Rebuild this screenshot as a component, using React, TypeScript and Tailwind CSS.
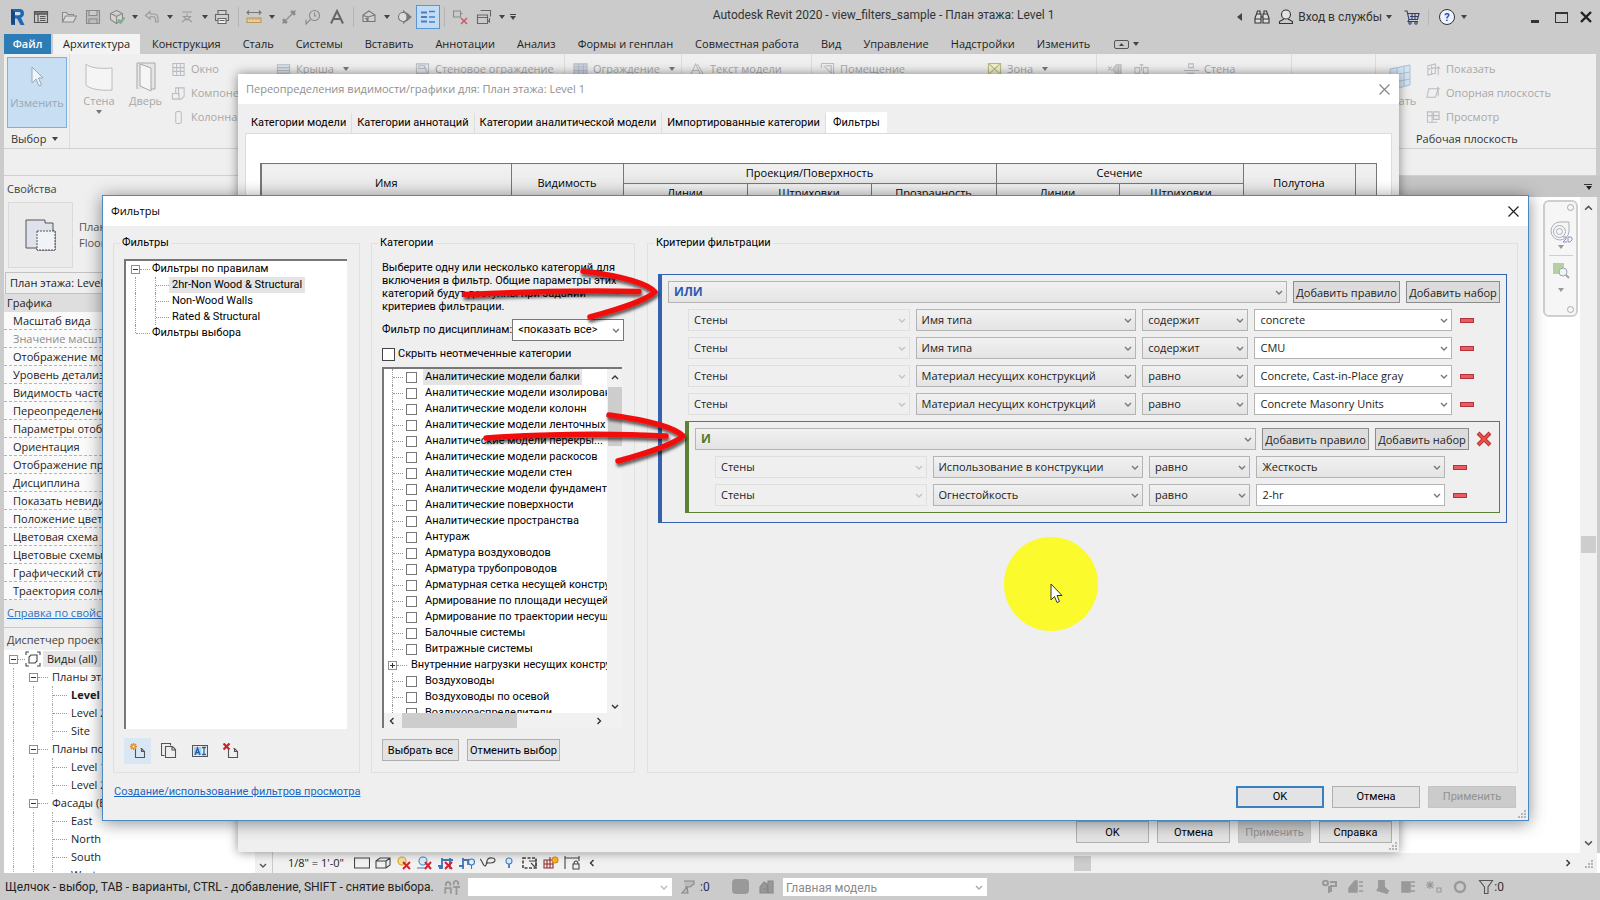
import type { ReactNode } from "react";

const FONT = "font-['Open_Sans','Noto_Sans',sans-serif]";
const NARROW = "font-['Roboto','Noto_Sans',sans-serif]";

function Svg({
  children,
  size = 16,
  color = "#8a8a8a",
}: {
  children: ReactNode;
  size?: number;
  color?: string;
}) {
  return (
    <svg
      width={size}
      height={size}
      viewBox="0 0 16 16"
      fill="none"
      stroke={color}
      strokeWidth="1.1"
      className="shrink-0"
      aria-hidden="true"
    >
      {children}
    </svg>
  );
}

function Caret({ color = "#444" }: { color?: string }) {
  return (
    <svg width="6" height="4" viewBox="0 0 6 4" className="shrink-0" aria-hidden="true">
      <path d="M0 0h6L3 4z" fill={color} />
    </svg>
  );
}

function Chevron({
  dir = "down",
  color = "#555",
  size = 8,
}: {
  dir?: "down" | "up" | "left" | "right";
  color?: string;
  size?: number;
}) {
  const d = {
    down: "M1 3l3 3 3-3",
    up: "M1 6l3-3 3 3",
    left: "M5.500 1l-3 3 3 3",
    right: "M2.500 1l3 3-3 3",
  }[dir];
  return (
    <svg width={size} height={size} viewBox="0 0 8 8" className="shrink-0" aria-hidden="true">
      <path d={d} fill="none" stroke={color} strokeWidth="1.4" />
    </svg>
  );
}

function CloseIcon({ color = "#222" }: { color?: string }) {
  return (
    <svg width="11" height="11" viewBox="0 0 11 11" aria-hidden="true">
      <path d="M.5.5l10 10M10.500.5l-10 10" stroke={color} strokeWidth="1.2" />
    </svg>
  );
}

function Grip() {
  return (
    <svg width="9" height="9" viewBox="0 0 9 9" fill="#b5b5b5" aria-hidden="true">
      <path d="M7 1h2v2H7zM4 4h2v2H4zM7 4h2v2H7zM1 7h2v2H1zM4 7h2v2H4zM7 7h2v2H7z" />
    </svg>
  );
}

/* ---------- title bar ---------- */

const icons: Record<string, ReactNode> = {
  logo: (
    <svg width="18" height="18" viewBox="0 0 18 18" aria-hidden="true">
      <path d="M3 1h8c4 0 5 2 5 4.500 0 2-1 3.500-3 4.200L16.500 17h-4L9 10.500H7V17H3z" fill="#1f69b4" />
      <path d="M7 4h3.500c1.500 0 2 .7 2 1.600 0 1-.6 1.700-2 1.700H7z" fill="#cfe0f2" />
      <path d="M3 1l4 3v13l-4-2z" fill="#164886" />
    </svg>
  ),
  home: (
    <Svg color="#555">
      <path d="M1.500 2.500h13v11h-13zM1.500 5h13M5 5v8.500M7 7.500h5.500M7 9.500h5.500M7 11.500h5.500" />
      <path d="M1.500 2.500h13V5h-13z" fill="#777" />
    </Svg>
  ),
  open: (
    <Svg>
      <path d="M1.500 13V3.500h4l1.500 2h5.500V7M1.500 13l3-6h11l-3 6z" fill="#d9d9d9" />
    </Svg>
  ),
  save: (
    <Svg>
      <path d="M1.500 1.500h13v13h-13zM4 1.500v5h8v-5M4 14.500V10h8v4.500" fill="#bdbdbd" />
    </Svg>
  ),
  sync: (
    <Svg>
      <path d="M7.500 1.500l6 3v6l-6 4-6-4v-6zM1.500 4.500l6 3 6-3M7.500 7.500v7" fill="#d4d4d4" />
      <path d="M9 10.500l2.500 3 4-5" stroke="#7fae8d" strokeWidth="2.4" />
    </Svg>
  ),
  undo: (
    <Svg color="#9a9a9a">
      <path d="M1.500 6.500l4.500-4v2.500h3.500c3 0 4.500 2 4.500 4.500v3.500h-2.500v-3c0-1.500-.8-2.300-2.300-2.300H6v2.500z" />
    </Svg>
  ),
  redo: (
    <Svg color="#9a9a9a">
      <path d="M3 3h10M8 4.500v3h3.500L8 11 4.500 7.500H8M3 13l4-3M9 10l4 3" />
    </Svg>
  ),
  print: (
    <Svg color="#666">
      <path d="M4 5.500v-4h8v4M1.500 5.500h13v6h-13z" fill="#d0d0d0" />
      <path d="M4 9.500h8v5H4zM5.500 11.500h5" fill="#eee" />
    </Svg>
  ),
  measure: (
    <Svg color="#777">
      <path d="M1 3.500h14M3 1.500l-2 2 2 2M13 1.500l2 2-2 2" />
      <path d="M1 9h14v4.500H1z" fill="#e8cf9a" stroke="#b79a5c" />
      <path d="M4 9v2M7 9v2M10 9v2M13 9v2" stroke="#b79a5c" />
    </Svg>
  ),
  dim: (
    <Svg>
      <path d="M3.500 12.500l9-9M1.500 10.500l4 4M10.500 1.500l4 4" />
      <path d="M2 14l1-4 3 3zM14 2l-4 1 3 3z" fill="#8a8a8a" />
    </Svg>
  ),
  tag: (
    <Svg>
      <circle cx="9.500" cy="6.500" r="5" />
      <path d="M9.500 3.500v3.500h2M5.500 10.500L1 15v-4.500" />
    </Svg>
  ),
  text: (
    <Svg color="#666">
      <path d="M2 14.500L8 2l6 12.500M4.200 10h7.600" strokeWidth="2" />
    </Svg>
  ),
  cube: (
    <Svg color="#777">
      <path d="M2 6l6-4 6 4v6.500H2zM2 6.500l5 1.500v5M7 8l7-2M4 9.500h2v3.500" fill="#cfcfcf" />
    </Svg>
  ),
  section: (
    <Svg color="#777">
      <circle cx="7" cy="8" r="4.500" fill="#ddd" />
      <path d="M7 1.500l6.500 6.500L7 14.500" />
      <path d="M11 4.500l4 3.500-4 3.500z" fill="#777" />
    </Svg>
  ),
  thin: (
    <Svg color="#4a7fc0">
      <path d="M1 3.500h6M1 8h6M1 12.500h6" strokeWidth="2.200" />
      <path d="M9 2.500h6M9 8h6M9 13h6" strokeWidth="1.300" />
    </Svg>
  ),
  closeHidden: (
    <Svg>
      <path d="M1.500 2h7v6h-7zM8.500 4.500h2" />
      <path d="M9 9l6 6M15 9l-6 6" stroke="#c75b64" strokeWidth="1.5" />
    </Svg>
  ),
  windows: (
    <Svg color="#666">
      <path d="M4.500 1.500h10v6M1.500 6h10v8.500h-10zM1.500 8.500h10M13.500 9v4l-1.500-1.500" />
    </Svg>
  ),
};

// "v" is a drop-down arrow, "|" is a separator, "~" is a small space
const quickAccess = [
  "logo", "home", "~", "open", "save", "sync", "v", "undo", "v", "redo", "v", "print", "|",
  "measure", "v", "dim", "tag", "text", "|", "cube", "v", "section", "thin", "|",
  "closeHidden", "windows", "v", "menu",
];

function TitleBar() {
  return (
    <header className="flex h-[34px] shrink-0 items-center bg-[#cbcbcb] pl-[5px] pr-2 text-[#333]">
      <div className="flex items-center">
        {quickAccess.map((name, i) => {
          if (name === "~") return <span key={i} className="w-1" />;
          if (name === "|")
            return (
              <span key={i} className="flex w-2 justify-center">
                <span className="h-5 w-px bg-[#b5b5b5]" />
              </span>
            );
          if (name === "v" || name === "menu")
            return (
              <button key={i} aria-label="Ещё" className="flex h-6 w-[11px] flex-col items-center justify-center gap-px">
                {name === "menu" && <span className="h-px w-1.5 bg-[#444]" />}
                <Caret />
              </button>
            );
          return (
            <button
              key={i}
              aria-label={name}
              className={`flex h-6 w-6 items-center justify-center ${
                name === "thin" ? "border border-[#5a96d0] bg-[#c3dcf5]" : ""
              }`}
            >
              {icons[name]}
            </button>
          );
        })}
      </div>
      <h1 className={`flex-1 pb-1 pl-3 text-center text-[12px] whitespace-nowrap ${NARROW}`}>
        Autodesk Revit 2020 - view_filters_sample - План этажа: Level 1
      </h1>
      <div className={`flex items-center text-[12px] ${NARROW}`}>
        <svg width="5" height="8" viewBox="0 0 5 8" className="mr-3" aria-hidden="true">
          <path d="M5 0v8L0 4z" fill="#444" />
        </svg>
        <button aria-label="Поиск" className="mr-2">
          <Svg color="#333">
            <path d="M2.500 5l1-3h2.500v3M13.500 5l-1-3H10v3M1 9l1.500-4h4.500v9H1zM15 9l-1.500-4H9v9h6zM7 8h2M1 10h6M9 10h6" fill="#ddd" />
          </Svg>
        </button>
        <button className="flex items-center gap-1">
          <Svg color="#333">
            <circle cx="8" cy="5.500" r="4.500" fill="#e4e4e4" />
            <path d="M6 10l-4.500 2.500v2h13v-2L10 10" />
          </Svg>
          Вход в службы
          <Caret />
        </button>
        <button aria-label="Магазин" className="ml-3 border-r border-[#b8b8b8] pr-2">
          <Svg color="#33406b">
            <path d="M.5 2h2.500l2 8.500h8.500L15 4.500H4M5 10.500L4 12.500h10M6 7.500h8M8 4.500v6M11 4.500v6" />
            <circle cx="6" cy="14" r="1.200" />
            <circle cx="12" cy="14" r="1.200" />
          </Svg>
        </button>
        <button className="ml-2.5 flex items-center gap-1.5" aria-label="Справка">
          <span className="flex h-4 w-4 items-center justify-center rounded-full border border-[#333] bg-[#eef4ff] text-[11px] leading-none font-bold text-[#1f4fb0]">
            ?
          </span>
          <Caret />
        </button>
        <div className="ml-16 flex items-center gap-3">
          <button aria-label="Свернуть" className="flex h-4 w-3 items-end pb-0.5">
            <span className="h-[3px] w-2 bg-[#333]" />
          </button>
          <button aria-label="Развернуть" className="h-[11px] w-[13px] border border-t-2 border-[#333]" />
          <button aria-label="Закрыть">
            <svg width="12" height="12" viewBox="0 0 12 12" aria-hidden="true">
              <path d="M1 1l10 10M11 1L1 11" stroke="#222" strokeWidth="2.4" />
            </svg>
          </button>
        </div>
      </div>
    </header>
  );
}

const ribbonTabs = [
  "Архитектура", "Конструкция", "Сталь", "Системы", "Вставить", "Аннотации", "Анализ",
  "Формы и генплан", "Совместная работа", "Вид", "Управление", "Надстройки", "Изменить",
];

function RibbonTabs() {
  return (
    <nav className="flex h-5 shrink-0 items-stretch gap-0.5 bg-[#cbcbcb] pl-1 text-[11px] leading-[18px] text-[#222]">
      <button className="w-[47px] bg-[#2d7cb5] font-semibold text-white">Файл</button>
      {ribbonTabs.map((tab, i) => (
        <button key={tab} className={`px-[10px] whitespace-nowrap ${i === 0 ? "bg-[#f3f3f3]" : ""}`}>
          {tab}
        </button>
      ))}
      <button aria-label="Свернуть ленту" className="ml-3 flex items-center gap-1">
        <span className="flex h-[9px] w-[15px] items-center justify-center rounded-xs border border-[#555]">
          <svg width="5" height="3" viewBox="0 0 5 3" aria-hidden="true">
            <path d="M0 3h5L2.500 0z" fill="#444" />
          </svg>
        </span>
        <Caret />
      </button>
    </nav>
  );
}

/* ---------- ribbon ---------- */

function SmallTool({ icon, label, arrow }: { icon: ReactNode; label?: string; arrow?: boolean }) {
  return (
    <button disabled className="flex h-6 items-center gap-[5px] whitespace-nowrap text-[#a8a8a8]">
      <Svg size={15} color="#b9bcc2">
        {icon}
      </Svg>
      {label}
      {arrow && (
        <span className="ml-1">
          <Caret color="#777" />
        </span>
      )}
    </button>
  );
}

function Ribbon() {
  return (
    <section className="mx-1 flex h-[95px] shrink-0 overflow-hidden border-b border-[#d0d0d0] bg-[#efefef] text-[11px]">
      <div className="flex w-[66px] shrink-0 flex-col border-r border-[#dcdcdc] px-[3px] pt-[3px]">
        <button className="flex h-[71px] w-[60px] flex-col items-center justify-between border border-[#7db0dc] bg-[#c7def3] pt-2 pb-4 text-[#9aa7b4]">
          <svg width="14" height="22" viewBox="0 0 14 22" aria-hidden="true">
            <path d="M2 1v16l4-4 3 7 2.500-1-3-7H13z" fill="#eef5fc" stroke="#9aa7b4" />
          </svg>
          Изменить
        </button>
        <button className="mt-0.5 flex items-center gap-1.5 pl-1 leading-[18px] text-[#333]">
          Выбор <Caret />
        </button>
      </div>
      <div className="flex shrink-0 border-r border-[#dcdcdc] pt-[3px]">
        <button disabled className="flex w-[58px] flex-col items-center pt-[5px] text-[#a8a8a8]">
          <svg width="28" height="30" viewBox="0 0 28 30" aria-hidden="true">
            <path d="M1 2c4 4 14 5 26 4v22C15 29 5 27 1 23z" fill="#f5f5f5" stroke="#bcbcbc" />
          </svg>
          <span className="leading-[18px]">Стена</span>
          <Caret color="#777" />
        </button>
        <button disabled className="flex w-[35px] flex-col items-center pt-[5px] text-[#a8a8a8]">
          <svg width="20" height="30" viewBox="0 0 20 30" aria-hidden="true">
            <path d="M1 27V1h18v26h-4" fill="#e6e6e6" stroke="#a8a8a8" />
            <path d="M4 2l11 4v23L4 24z" fill="#f5f5f5" stroke="#a8a8a8" />
          </svg>
          <span className="leading-[18px]">Дверь</span>
        </button>
        <div className="flex w-[105px] flex-col pl-2">
          <SmallTool label="Окно" icon={<path d="M2 1.500h12v13H2zM6 1.500v13M10 1.500v13M2 6h12M2 10h12" />} />
          <SmallTool label="Компонент" icon={<path d="M1.500 8h7v6h-7zM5 8V2h9v9l-3 3H8M8 2v8" />} />
          <SmallTool label="Колонна" icon={<rect x="5" y="1.500" width="6" height="13" rx="2" />} />
        </div>
        <div className="w-[139px] pl-2">
          <SmallTool label="Крыша" arrow icon={<path d="M1.500 3h13v9h-13zM1.500 6h13M1.500 9h13" fill="#dbe6f3" />} />
        </div>
        <div className="w-[157px] pl-2">
          <SmallTool label="Стеновое ограждение" icon={<path d="M1.500 2h13v10h-13zM4 4h6v3H4zM10 4l3 8" fill="#e2eaf5" />} />
        </div>
      </div>
      <div className="w-[117px] shrink-0 border-r border-[#dcdcdc] pt-[3px] pl-2">
        <SmallTool label="Ограждение" arrow icon={<path d="M1 2h14v11H1zM1 5h14M6 2v11M11 2v11M1 9h14" fill="#cdd6ee" />} />
      </div>
      <div className="w-[130px] shrink-0 border-r border-[#dcdcdc] pt-[3px] pl-2">
        <SmallTool label="Текст модели" icon={<path d="M1 13L6 2l5 11M3 9h6M8 2l6 11h-3" />} />
      </div>
      <div className="w-[167px] shrink-0 pt-[3px] pl-2">
        <SmallTool label="Помещение" icon={<path d="M1.500 1.500h13v13h-8M1.500 1.500v5M4 4l8 8M6 4h6v8" />} />
      </div>
      <div className="w-[118px] shrink-0 border-r border-[#dcdcdc] pt-[3px] pl-2">
        <SmallTool label="Зона" arrow icon={<path d="M1.500 1.500h13v12h-13zM1.500 1.500l13 12M14.500 1.500l-13 12" stroke="#b9b97c" fill="#f0f0cf" />} />
      </div>
      <div className="flex w-[79px] shrink-0 gap-3 pt-[3px] pl-2.5">
        <SmallTool icon={<path d="M1 5l4 4M5 5l-4 4M6 8l4-5h5v10h-5zM12 4v9" fill="#d4d4d4" />} />
        <SmallTool icon={<path d="M1 6h5v6H1zM10 6h5v6h-5zM8 2v7M6 3h4" />} />
      </div>
      <div className="w-[116px] shrink-0 border-r border-[#dcdcdc] pt-[3px] pl-2">
        <SmallTool label="Стена" icon={<path d="M0 9h16M5 2h5v4H5zM3 12h8" />} />
      </div>
      <div className="w-[84px] shrink-0 border-r border-[#dcdcdc]" />
      <div className="flex flex-1 flex-col pt-[3px]">
        <div className="flex h-[72px]">
          <button disabled className="flex w-11 flex-col items-center pt-[7px] text-[#a8a8a8]">
            <svg width="28" height="28" viewBox="0 0 28 28" aria-hidden="true">
              <path d="M6 5l20-4v20L6 26z" fill="#d5e4f2" stroke="#a9c0d6" />
              <path d="M13 4v20M20 2v20M6 12l20-4M6 19l20-4" stroke="#a9c0d6" />
            </svg>
            <span className="leading-[18px]">Задать</span>
          </button>
          <div className="flex flex-col pl-1.5">
            <SmallTool label="Показать" icon={<path d="M2 4l8-2v10l-8 2zM6 3v10M2 8l8-2M13 5v9M11 7l2-2 2 2" />} />
            <SmallTool label="Опорная плоскость" icon={<path d="M3 3h10l-3 9H1zM12 1l2 2-2 2M13 3v8" />} />
            <SmallTool label="Просмотр" icon={<path d="M1.500 2h5v11h-5zM8 2h6v8H8zM1.500 6h12M4 13h8" />} />
          </div>
        </div>
        <div className="pl-10 leading-5 text-[#333]">Рабочая плоскость</div>
      </div>
    </section>
  );
}

/* ---------- left palettes ---------- */

const properties = [
  "Масштаб вида", "Значение масштаба", "Отображение модели", "Уровень детализации",
  "Видимость частей", "Переопределения видимости", "Параметры отображения", "Ориентация",
  "Отображение примыканий", "Дисциплина", "Показать невидимые линии", "Положение цветовой схемы",
  "Цветовая схема", "Цветовые схемы систем", "Графический стиль", "Траектория солнца",
];

function ExpandBox({ plus }: { plus?: boolean }) {
  return (
    <svg width="9" height="9" viewBox="0 0 9 9" className="shrink-0" aria-hidden="true">
      <rect x=".5" y=".5" width="8" height="8" fill="#fff" stroke="#8f8f8f" />
      <path d={plus ? "M2 4.500h5M4.500 2v5" : "M2 4.500h5"} stroke="#333" />
    </svg>
  );
}

const project = [
  { level: 1, label: "Планы этажей" },
  { level: 2, label: "Level 1", bold: true },
  { level: 2, label: "Level 2" },
  { level: 2, label: "Site" },
  { level: 1, label: "Планы потолков" },
  { level: 2, label: "Level 1" },
  { level: 2, label: "Level 2" },
  { level: 1, label: "Фасады (Building)" },
  { level: 2, label: "East" },
  { level: 2, label: "North" },
  { level: 2, label: "South" },
  { level: 2, label: "West" },
];

function Palettes() {
  return (
    <aside className="flex w-[273px] shrink-0 flex-col overflow-hidden border-r border-l-4 border-[#cbcbcb] bg-[#efefef] text-[11px] text-[#1c1c1c]">
      <h2 className="h-[22px] shrink-0 pl-[3px] leading-[26px] text-[#444]">Свойства</h2>
      <div className="flex h-[74px] shrink-0 items-center gap-1.5 pl-1 text-[#555]">
        <div className="flex h-[66px] w-[65px] items-center justify-center border border-[#dadada] bg-[#ebebeb]">
          <svg width="31" height="32" viewBox="0 0 31 32" aria-hidden="true">
            <path d="M1 1h19v3h8v8h2v19H12v-2H1z" fill="#dfe2ea" stroke="#555" />
            <path d="M12 12h18v19H12z" fill="#f2f3f6" stroke="#555" strokeDasharray="2 1" />
          </svg>
        </div>
        <div className="leading-4">
          План этажа
          <br />
          Floor Plan
        </div>
      </div>
      <select
        aria-label="Тип вида"
        className="mx-px h-[22px] shrink-0 appearance-none border border-[#c2c2c2] bg-[#efefef] pl-1"
      >
        <option>План этажа: Level 1</option>
      </select>
      <div className="h-[18px] shrink-0 bg-[#dedede] pl-[3px] leading-[18px]">Графика</div>
      {properties.map((p, i) => (
        <div
          key={p}
          className={`h-[18px] shrink-0 border-b border-dashed border-[#b5b5b5] bg-[#fafafa] pl-[9px] leading-[17px] whitespace-nowrap ${
            i === 1 ? "text-[#8c8c8c]" : ""
          }`}
        >
          {p}
        </div>
      ))}
      <div className="h-7 shrink-0 border-b border-[#c8c8c8] pl-[3px] leading-[25px]">
        <a href="#properties" className="text-[#2a73c9] underline">
          Справка по свойствам
        </a>
      </div>
      <h2 className="h-[22px] shrink-0 pl-[3px] leading-6 text-[#444]">Диспетчер проекта</h2>
      <div className="flex min-h-0 flex-1 bg-white">
        <ul className="flex-1 overflow-hidden whitespace-nowrap">
          <li className="flex h-[18px] items-center pl-[5px]">
            <ExpandBox />
            <span className="w-[7px] border-t border-dotted border-[#999]" />
            <Svg color="#444">
              <path d="M1 4V1h3M12 1h3v3M15 12v3h-3M4 15H1v-3M6 4h6v6l-2 2H4V6z" />
            </Svg>
            <span className="ml-0.5 bg-[#e6e6e6] px-1">Виды (all)</span>
          </li>
          {project.map((row, i) => (
            <li key={i} className="flex h-[18px] items-center">
              <span className="ml-[9px] h-full w-4 border-l border-dotted border-[#aaa]" />
              {row.level === 1 ? (
                <>
                  <ExpandBox />
                  <span className="mr-1 w-[10px] border-t border-dotted border-[#999]" />
                </>
              ) : (
                <>
                  <span className="ml-1 h-full w-[19px] border-l border-dotted border-[#aaa]" />
                  <span className="h-full w-px border-l border-dotted border-[#aaa]" />
                  <span className="mr-1 w-[14px] border-t border-dotted border-[#999]" />
                </>
              )}
              <span className={row.bold ? "font-bold" : ""}>{row.label}</span>
            </li>
          ))}
        </ul>
        <div className="flex w-[17px] flex-col justify-end bg-[#f1f1f1] pb-1 pl-1">
          <Chevron />
        </div>
      </div>
    </aside>
  );
}

/* ---------- drawing area ---------- */

const viewIcons: ReactNode[] = [
  <path d="M.5 3h15v10H.5z" />,
  <path d="M1 6l4-3h10v7l-4 3H1zM1 6h10v7M11 6l4-3" />,
  <>
    <circle cx="6" cy="6" r="4" fill="#f8e29a" stroke="#d9a520" />
    <path d="M7 7l7 7M14 7l-7 7" stroke="#d2232a" strokeWidth="2" />
  </>,
  <>
    <circle cx="6" cy="6" r="4" stroke="#4d86c6" fill="#dcebfa" />
    <path d="M0 13h8" stroke="#4d86c6" />
    <path d="M8 7l6 7M14 7l-6 7" stroke="#d2232a" strokeWidth="2" />
  </>,
  <>
    <path d="M0 11h5M4 3v11M4 5h11M12 3v11M1 13h3" stroke="#3f78b8" strokeWidth="1.800" />
    <path d="M7 7l7 7M14 7l-7 7" stroke="#d2232a" strokeWidth="2" />
  </>,
  <>
    <path d="M0 11h5M4 3v11M4 5h8M9 5v5" stroke="#3f78b8" strokeWidth="1.800" />
    <circle cx="12.500" cy="7" r="3" fill="#e6f0fb" stroke="#3f78b8" />
    <path d="M12.500 10v4" stroke="#3f78b8" />
  </>,
  <path d="M0 4c2 1 3 7 5 7s1-5 3-7 7-1 7 1-2 3-5 3-3-1-3 1" />,
  <>
    <circle cx="8" cy="6" r="3" fill="#dcebfa" stroke="#4d86c6" />
    <path d="M8 9v4" stroke="#4d86c6" strokeWidth="2" />
  </>,
  <>
    <path d="M1 3h13v10H1z" strokeDasharray="3 1.500" strokeWidth="1.600" />
    <path d="M7 6h7v7M9 8l4 4" />
  </>,
  <>
    <path d="M1 5h9v8H1zM4 5v8M1 9h9M7 2v11" stroke="#8e2a2a" />
    <circle cx="12" cy="5" r="3" fill="#f7b52c" stroke="#d98a1e" />
  </>,
  <path d="M1 1v13M15 1v5M1 3h14M9 9h6v5H9zM10 9c0-4 4-4 4 0" />,
];

function DrawingArea() {
  return (
    <main className="flex min-w-0 flex-1 flex-col bg-white">
      <div className="flex h-[21px] shrink-0 flex-col items-end justify-center gap-px bg-[#c6c6c6] pr-2">
        <span className="h-px w-2 bg-[#333]" />
        <Caret color="#222" />
      </div>
      <div className="flex min-h-0 flex-1">
        <div className="relative flex-1">
          <div className="absolute top-[3px] right-[2px] flex h-[117px] w-[35px] flex-col items-center rounded-md border-2 border-[#cfcfcf] bg-[#f6f6f6]">
            <span className="mt-0.5 mr-0.5 h-[7px] w-[7px] self-end rounded-full border border-[#aaa]" />
            <button aria-label="Штурвал" className="mt-2.5">
              <svg width="24" height="24" viewBox="0 0 24 24" fill="none" stroke="#a8afb8" aria-hidden="true">
                <path d="M11 1h9v9a9 9 0 1 1-9-9z" />
                <circle cx="10.500" cy="10.500" r="6" />
                <circle cx="10.500" cy="10.500" r="3" />
                <path d="M14 16h3v2l-3 3h4M19 16v5h2l2-2v-2l-1-1z" stroke="#8d93c4" />
              </svg>
            </button>
            <Caret color="#999" />
            <span className="my-1.5 h-px w-6 bg-[#cfcfcf]" />
            <button aria-label="Масштаб">
              <svg width="18" height="18" viewBox="0 0 18 18" aria-hidden="true">
                <path d="M1 1h11v11H1z" fill="#b5d0a0" />
                <circle cx="11" cy="10" r="4" fill="#f0f4f0" stroke="#9aa7b4" />
                <path d="M14 13l3 3" stroke="#9aa7b4" strokeWidth="2" />
              </svg>
            </button>
            <span className="mt-2">
              <Caret color="#999" />
            </span>
            <span className="mt-auto mr-0.5 mb-0.5 h-[7px] w-[7px] self-end rounded-full border border-[#aaa]" />
          </div>
        </div>
        <div className="flex w-[17px] flex-col items-center bg-[#f1f1f1] py-1.5">
          <Chevron dir="up" size={9} />
          <span className="flex-[323]" />
          <span className="h-[17px] w-[15px] bg-[#cdcdcd]" />
          <span className="flex-[285]" />
          <Chevron size={9} />
        </div>
        <div className="w-[3px] bg-[#cbcbcb]" />
      </div>
      <div className="mr-[3px] flex h-5 shrink-0 items-center bg-[#f1f1f1] pl-[15px] text-[11px] text-[#222]">
        <span className="w-[66px]">1/8" = 1'-0"</span>
        <div className="flex items-center gap-[5px]">
          {viewIcons.map((icon, i) => (
            <Svg key={i} color="#444">
              {icon}
            </Svg>
          ))}
        </div>
        <span className="ml-2">
          <Chevron dir="left" color="#333" />
        </span>
        <div className="flex flex-1 justify-center pl-1">
          <span className="h-[15px] w-[17px] bg-[#cdcdcd]" />
        </div>
        <Chevron dir="right" color="#333" />
        <span className="ml-3 pr-1">
          <Grip />
        </span>
      </div>
    </main>
  );
}

const statusIcons: ReactNode[] = [
  <path d="M1 4c0-3 5-3 5 0s-5 3-5 0M8 3h6v4H8M7 7v7M9 8v5" strokeWidth="2" />,
  <path d="M1 13V9l6-7h2v11zM11 3h4M11 7h4M11 12h4" strokeWidth="1.600" fill="#999" />,
  <path d="M5 2h5v5H5zM3 12l3-5h3l4 4v4M11 12h4" strokeWidth="1.800" fill="#999" />,
  <path d="M2 3h8v10H2zM11 3h4M11 7h4M11 12h4" strokeWidth="1.600" fill="#999" />,
  <path d="M4 2v8M0 6h8M1 3l6 6M7 3L1 9M11 9h4v4h-4z" />,
  <circle cx="8" cy="8" r="5" strokeWidth="2.400" />,
];

function StatusBar() {
  return (
    <footer className={`flex h-[27px] shrink-0 items-center bg-[#cbcbcb] pl-[5px] text-[12px] text-[#222] ${NARROW}`}>
      <span className="w-[438px] whitespace-nowrap">
        Щелчок - выбор, TAB - варианты, CTRL - добавление, SHIFT - снятие выбора.
      </span>
      <Svg size={18} color="#999">
        <path d="M3 7a2 2 0 1 1 3 0M2 14V9h5v5M10 6a2 2 0 1 1 3 0M9 8h6M12 8v7" strokeWidth="1.600" />
      </Svg>
      <Combo label="Рабочий набор" value="" className="ml-[7px] h-[18px] w-[204px]" fill="bg-white" border="border-white" chevron="#bbb" />
      <span className="ml-2">
        <Svg color="#888">
          <path d="M4 2h10v3l-4 3H5M7 8l-5 6h6z" fill="#bbb" />
        </Svg>
      </span>
      <span className="ml-1 w-8 text-[#24305c]">:0</span>
      <span className="h-[15px] w-[17px] rounded-sm bg-[#999]" />
      <span className="ml-2.5 w-6">
        <Svg color="#888">
          <path d="M1 14V8l4-5 3 2v9zM9 2h5v12H9zM3 10h4" fill="#999" />
        </Svg>
      </span>
      <Combo label="Вариант" value="Главная модель" className="h-[18px] w-[204px] text-[#8a8a8a]" fill="bg-white" border="border-white" chevron="#aaa" pad="pl-0.5" />
      <div className="ml-auto flex items-center gap-[10px] pr-[96px]">
        {statusIcons.map((icon, i) => (
          <Svg key={i} color="#999">
            {icon}
          </Svg>
        ))}
        <span className="flex items-center text-[#333]">
          <Svg color="#555">
            <path d="M1.500 1.500h13L10 8v6.500H6.500V8z" fill="#ccc" />
          </Svg>
          :0
        </span>
      </div>
    </footer>
  );
}

/* ---------- shared controls ---------- */

function Combo({
  label,
  value,
  className = "",
  fill = "bg-linear-to-b from-[#f1f1f1] to-[#e4e4e4]",
  border = "border-[#b4b4b4]",
  chevron = "#777",
  pad = "pl-[5px]",
  disabled = false,
}: {
  label: string;
  value: string;
  className?: string;
  fill?: string;
  border?: string;
  chevron?: string;
  pad?: string;
  disabled?: boolean;
}) {
  return (
    <div className={`relative min-w-0 ${className}`}>
      <select
        aria-label={label}
        disabled={disabled}
        className={`block h-full w-full appearance-none border pr-4 opacity-100 ${pad} ${fill} ${border}`}
      >
        <option>{value}</option>
      </select>
      <span className="pointer-events-none absolute inset-y-0 right-1 flex items-center">
        <Chevron color={chevron} />
      </span>
    </div>
  );
}

function DialogButton({
  children,
  className = "",
  primary,
  disabled,
}: {
  children: ReactNode;
  className?: string;
  primary?: boolean;
  disabled?: boolean;
}) {
  const look = disabled
    ? "border border-[#c4c4c4] bg-[#cbcbcb] text-[#929292]"
    : primary
      ? "border-2 border-[#3a7fc0] bg-[#e3e3e6] text-black"
      : "border border-[#b0b0b0] bg-[#e3e3e3] text-black";
  return (
    <button disabled={disabled} className={`h-[22px] shrink-0 leading-none whitespace-nowrap ${look} ${className}`}>
      {children}
    </button>
  );
}

/* ---------- visibility / graphics dialog ---------- */

const vgTabs = [
  "Категории модели", "Категории аннотаций", "Категории аналитической модели", "Импортированные категории",
];

function VisibilityDialog() {
  const cell = "border border-[#777] bg-linear-to-b from-[#f2f2f2] to-[#e4e4e4] font-normal";
  return (
    <section
      className={`absolute top-[74px] right-[201px] bottom-[48px] left-[238px] flex flex-col bg-[#efefef] text-[11px] text-black shadow-[0_0_10px_rgba(0,0,0,0.45)] ${NARROW}`}
    >
      <div className={`flex h-[30px] shrink-0 items-center justify-between bg-white pr-[9px] pl-2 text-[#8f8f8f] ${FONT}`}>
        <h2>Переопределения видимости/графики для: План этажа: Level 1</h2>
        <button aria-label="Закрыть">
          <CloseIcon color="#888" />
        </button>
      </div>
      <div className="mt-2 flex h-[21px] shrink-0 items-end pl-2">
        {vgTabs.map((t) => (
          <button key={t} className="h-5 border-r border-[#dedede] px-[5px] leading-5 whitespace-nowrap">
            {t}
          </button>
        ))}
        <button className="h-[21px] bg-white px-[7px] leading-[17px]">Фильтры</button>
      </div>
      <div className={`mx-[7px] min-h-0 flex-1 overflow-hidden border border-[#dcdcdc] bg-white pt-[29px] pr-[14px] pl-[14px] ${FONT}`}>
        <table className="w-full table-fixed border-collapse">
          <colgroup>
            <col className="w-[250px]" />
            <col className="w-[112px]" />
            <col className="w-[124px]" />
            <col className="w-[124px]" />
            <col className="w-[125px]" />
            <col className="w-[123px]" />
            <col className="w-[124px]" />
            <col className="w-[112px]" />
            <col />
          </colgroup>
          <thead>
            <tr className="h-5">
              <th rowSpan={2} className={`${cell} h-10 border-l-2`}>Имя</th>
              <th rowSpan={2} className={cell}>Видимость</th>
              <th colSpan={3} className={cell}>Проекция/Поверхность</th>
              <th colSpan={2} className={cell}>Сечение</th>
              <th rowSpan={2} className={cell}>Полутона</th>
              <th rowSpan={2} className={cell} />
            </tr>
            <tr className="h-5">
              <th className={cell}>Линии</th>
              <th className={cell}>Штриховки</th>
              <th className={cell}>Прозрачность</th>
              <th className={cell}>Линии</th>
              <th className={cell}>Штриховки</th>
            </tr>
          </thead>
        </table>
      </div>
      <div className="flex shrink-0 justify-end gap-2 pt-2 pr-[7px] pb-[9px]">
        <DialogButton className="w-[73px]">OK</DialogButton>
        <DialogButton className="w-[73px]">Отмена</DialogButton>
        <DialogButton className="w-[73px]" disabled>Применить</DialogButton>
        <DialogButton className="w-[73px]">Справка</DialogButton>
      </div>
      <span className="absolute right-0.5 bottom-0.5">
        <Grip />
      </span>
    </section>
  );
}

/* ---------- filters dialog ---------- */

function FilterList() {
  const rules = ["2hr-Non Wood & Structural", "Non-Wood Walls", "Rated & Structural"];
  return (
    <ul className="mr-0.5 min-h-0 flex-1 overflow-hidden border-t-2 border-l-2 border-[#777] bg-white whitespace-nowrap">
      <li className="flex h-4 items-center pl-[5px]">
        <ExpandBox />
        <span className="mr-0.5 w-[10px] border-t border-dotted border-[#999]" />
        Фильтры по правилам
      </li>
      {rules.map((r, i) => (
        <li key={r} className="flex h-4 items-center">
          <span className="ml-[9px] h-full w-5 border-l border-dotted border-[#999]" />
          <span className="h-full border-l border-dotted border-[#999]" />
          <span className="w-[13px] border-t border-dotted border-[#999]" />
          <span className={`px-[3px] leading-4 ${i === 0 ? "bg-[#e4e4e4]" : ""}`}>{r}</span>
        </li>
      ))}
      <li className="flex h-4 items-center">
        <span className="ml-[9px] h-2 w-px self-start border-l border-dotted border-[#999]" />
        <span className="mr-0.5 w-[14px] border-t border-dotted border-[#999]" />
        Фильтры выбора
      </li>
    </ul>
  );
}

const page = "M5.500 5.500v9h9v-6l-3-3h-1M11.500 5.500v3h3";

const filterTools: { label: string; icon: ReactNode }[] = [
  {
    label: "Создать",
    icon: (
      <>
        <path d={page} />
        <path d="M3.500 0v7M0 3.500h7M1 1l5 5M6 1L1 6" stroke="#e88b1a" strokeWidth="1.400" />
        <circle cx="3.500" cy="3.500" r="1" fill="#fff" stroke="none" />
      </>
    ),
  },
  {
    label: "Копировать",
    icon: <path d="M3.500 12.500h-3V.5h9v2M4.500 3.500h7l3 3v8h-10zM11 3.500v3.500h3.500" />,
  },
  {
    label: "Переименовать",
    icon: (
      <>
        <path d="M.5 2.500h15v11H.5z" />
        <path d="M2 4h7.500v8H2z" fill="#a9cdf2" stroke="none" />
        <path d="M3 12l2.500-7 2.500 7M4 9.500h3M10 4.500h4M12 4.500v7M10 11.500h4" stroke="#2360a5" strokeWidth="1.300" />
      </>
    ),
  },
  {
    label: "Удалить",
    icon: (
      <>
        <path d={page} />
        <path d="M.5.5l6 6M6.500.5l-6 6" stroke="#c8202a" strokeWidth="2.200" />
      </>
    ),
  },
];

const categories = [
  "Аналитические модели балки",
  "Аналитические модели изолированных фундаментов",
  "Аналитические модели колонн",
  "Аналитические модели ленточных фундаментов",
  "Аналитические модели перекры...",
  "Аналитические модели раскосов",
  "Аналитические модели стен",
  "Аналитические модели фундаментных плит",
  "Аналитические поверхности",
  "Аналитические пространства",
  "Антураж",
  "Арматура воздуховодов",
  "Арматура трубопроводов",
  "Арматурная сетка несущей конструкции",
  "Армирование по площади несущей конструкции",
  "Армирование по траектории несущей конструкции",
  "Балочные системы",
  "Витражные системы",
  "Внутренние нагрузки несущих конструкций",
  "Воздуховоды",
  "Воздуховоды по осевой",
  "Воздухораспределители",
];

function CategoryList() {
  return (
    <div className="mt-1.5 mr-0.5 flex min-h-0 flex-1 overflow-hidden border-t-2 border-l-2 border-[#777] bg-white">
      <div className="flex min-w-0 flex-1 flex-col">
        <ul className="min-h-0 flex-1 overflow-hidden whitespace-nowrap">
          {categories.map((c, i) =>
            i === 18 ? (
              <li key={c} className="flex h-4 items-center pl-1">
                <ExpandBox plus />
                <span className="mr-1 w-[10px] shrink-0 border-t border-dotted border-[#999]" />
                {c}
              </li>
            ) : (
              <li key={c} className="flex h-4 items-center">
                <span className="ml-2 h-full border-l border-dotted border-[#999]" />
                <span className="mr-[3px] w-[10px] shrink-0 border-t border-dotted border-[#999]" />
                <label className="flex shrink-0 items-center">
                  <input
                    type="checkbox"
                    className="mr-1.5 h-[11px] w-[11px] shrink-0 appearance-none border border-[#777] bg-white"
                  />
                  <span className={`px-0.5 leading-4 ${i === 0 ? "bg-[#e4e4e4]" : ""}`}>{c}</span>
                </label>
              </li>
            )
          )}
        </ul>
        <div className="flex h-[15px] shrink-0 items-center bg-[#f1f1f1] px-1">
          <Chevron dir="left" color="#333" />
          <span className="ml-1.5 h-full w-[115px] bg-[#cdcdcd]" />
          <span className="flex-1" />
          <Chevron dir="right" color="#333" />
        </div>
      </div>
      <div className="flex w-[15px] shrink-0 flex-col items-center bg-[#f1f1f1] pt-1 pb-[18px]">
        <Chevron dir="up" color="#333" />
        <span className="mt-1.5 h-[59px] w-[14px] bg-[#cdcdcd]" />
        <span className="flex-1" />
        <Chevron color="#333" />
      </div>
    </div>
  );
}

type Rule = { prop: string; cond: string; value: string; list?: boolean };

const orRules: Rule[] = [
  { prop: "Имя типа", cond: "содержит", value: "concrete" },
  { prop: "Имя типа", cond: "содержит", value: "CMU" },
  { prop: "Материал несущих конструкций", cond: "равно", value: "Concrete, Cast-in-Place gray" },
  { prop: "Материал несущих конструкций", cond: "равно", value: "Concrete Masonry Units" },
];

const andRules: Rule[] = [
  { prop: "Использование в конструкции", cond: "равно", value: "Жесткость", list: true },
  { prop: "Огнестойкость", cond: "равно", value: "2-hr" },
];

function RuleRow({ rule }: { rule: Rule }) {
  return (
    <div className="mt-1.5 flex h-[22px] gap-1.5 pl-5">
      <Combo label="Категория" value="Стены" disabled className="flex-[221] text-[#222]" fill="bg-[#efefef]" border="border-[#dfdfdf]" chevron="#c4c4c4" />
      <Combo label="Параметр" value={rule.prop} className="flex-[220]" />
      <Combo label="Условие" value={rule.cond} className="flex-[106]" />
      {rule.list ? (
        <Combo label="Значение" value={rule.value} className="flex-[197]" />
      ) : (
        <Combo label="Значение" value={rule.value} className="flex-[197]" fill="bg-white" />
      )}
      <button aria-label="Удалить правило" className="flex w-[42px] shrink-0 items-center pl-0.5">
        <span className="h-[5px] w-[14px] border border-[#b3323c] bg-[#ec5a62]" />
      </button>
    </div>
  );
}

function SetHeader({ name, color, removable }: { name: string; color: string; removable?: boolean }) {
  return (
    <div className="flex h-[22px] gap-1.5">
      <Combo label="Оператор" value={name} className={`flex-1 text-[12px] font-bold ${color}`} />
      <button className="w-[107px] shrink-0 border border-[#8c8c8c] bg-[#dcdcdc] leading-none whitespace-nowrap">
        Добавить правило
      </button>
      <button className="w-[94px] shrink-0 border border-[#8c8c8c] bg-[#dcdcdc] leading-none whitespace-nowrap">
        Добавить набор
      </button>
      {removable && (
        <button aria-label="Удалить набор" className="flex w-[18px] items-center justify-center">
          <svg width="16" height="16" viewBox="0 0 16 16" aria-hidden="true">
            <path d="M2 2l12 12M14 2L2 14" stroke="#b8322f" strokeWidth="4" />
            <path d="M2.500 2.500l11 11M13.500 2.500l-11 11" stroke="#ee5048" strokeWidth="2.200" />
          </svg>
        </button>
      )}
    </div>
  );
}

function Annotations() {
  return (
    <>
      <svg
        className="pointer-events-none absolute top-[68px] left-[355px]"
        width="240"
        height="210"
        viewBox="458 263 240 210"
        fill="none"
        stroke="#f20d0d"
        strokeWidth="5.500"
        strokeLinecap="round"
        strokeLinejoin="round"
        aria-hidden="true"
      >
        <defs>
          <filter id="drop" x="-10%" y="-10%" width="120%" height="130%">
            <feDropShadow dx="1" dy="3" stdDeviation="1.500" floodColor="#000" floodOpacity="0.6" />
          </filter>
        </defs>
        <g filter="url(#drop)">
          <path d="M583 270c30 4 62 10 72 21-10 9-36 17-65 25" />
          <path d="M465 293.500c60-3 120-4 174-3" />
          <path d="M609 414c30 4 63 10 74 21-10 9-36 17-65 25" />
          <path d="M486 437c60-4 120-5 180-2" />
        </g>
      </svg>
      <div className="pointer-events-none absolute top-[341px] left-[901px] h-[94px] w-[94px] rounded-full bg-[#fafa2d]">
        <svg width="14" height="22" viewBox="0 0 14 22" className="mt-[46px] ml-[46px]" aria-hidden="true">
          <path d="M1 1v16l3.500-3.500 2.500 6 2.500-1-2.500-6H12z" fill="#fff" stroke="#333" />
        </svg>
      </div>
    </>
  );
}

function FiltersDialog() {
  const group = "flex min-w-0 flex-col border border-[#e0e0e0] px-[10px]";
  const legend = "-ml-1 px-0.5 leading-[18px]";
  return (
    <section
      className={`absolute top-[195px] right-[71px] bottom-[79px] left-[102px] flex flex-col border border-[#4a8ac4] bg-[#efefef] text-[11px] text-black shadow-[0_2px_16px_rgba(0,0,0,0.45)] ${NARROW}`}
    >
      <div className={`flex h-[30px] shrink-0 items-center justify-between bg-white pr-[9px] pl-2 ${FONT}`}>
        <h2>Фильтры</h2>
        <button aria-label="Закрыть">
          <CloseIcon />
        </button>
      </div>
      <div className="flex min-h-0 flex-1 pt-2 pr-[10px] pl-[10px]">
        <fieldset className={`${group} w-[247px] shrink-0`}>
          <legend className={legend}>Фильтры</legend>
          <div className="flex min-h-0 flex-1 flex-col pt-[7px]">
            <FilterList />
            <div className="mt-[9px] mb-2 flex h-[26px] shrink-0 gap-1">
              {filterTools.map((t, i) => (
                <button
                  key={t.label}
                  aria-label={t.label}
                  className={`flex w-[27px] items-center justify-center ${i === 0 ? "bg-[#d9e7f4]" : ""}`}
                >
                  <Svg color="#555">{t.icon}</Svg>
                </button>
              ))}
            </div>
          </div>
        </fieldset>
        <fieldset className={`${group} ml-[11px] w-[264px] shrink-0`}>
          <legend className={legend}>Категории</legend>
          <p className="mt-[9px] leading-[13px] whitespace-nowrap">
            Выберите одну или несколько категорий для
            <br />
            включения в фильтр. Общие параметры этих
            <br />
            категорий будут доступны при задании
            <br />
            критериев фильтрации.
          </p>
          <div className="mt-1.5 flex h-[22px] shrink-0 items-center justify-between whitespace-nowrap">
            <span>Фильтр по дисциплинам:</span>
            <Combo
              label="Фильтр по дисциплинам"
              value="<показать все>"
              className="h-[22px] w-[112px] shrink-0"
              fill="bg-white"
              border="border-[#777]"
            />
          </div>
          <label className="mt-1.5 flex h-[14px] shrink-0 items-center gap-[3px] whitespace-nowrap">
            <input type="checkbox" className="h-[13px] w-[13px] appearance-none border border-[#444] bg-white" />
            Скрыть неотмеченные категории
          </label>
          <CategoryList />
          <div className="mt-[11px] mb-[11px] flex shrink-0 gap-2">
            <DialogButton className="w-[77px]">Выбрать все</DialogButton>
            <DialogButton className="w-[93px]">Отменить выбор</DialogButton>
          </div>
        </fieldset>
        <fieldset className={`${group} ml-3 flex-1`}>
          <legend className={legend}>Критерии фильтрации</legend>
          <div className={`mt-[22px] border border-l-4 border-[#3462ae] p-1.5 pb-[9px] text-[#1c1c1c] ${FONT}`}>
            <SetHeader name="ИЛИ" color="text-[#2b58b0]" />
            {orRules.map((r) => (
              <RuleRow key={r.value} rule={r} />
            ))}
            <div className="mt-1.5 ml-[17px] border border-l-4 border-[#5c8034] p-1.5">
              <SetHeader name="И" color="text-[#4c7a2a]" removable />
              {andRules.map((r) => (
                <RuleRow key={r.value} rule={r} />
              ))}
            </div>
          </div>
        </fieldset>
      </div>
      <div className="flex h-[47px] shrink-0 items-center justify-between pr-3 pl-[11px]">
        <a href="#filters" className="pb-2 text-[#1c66c4] underline">
          Создание/использование фильтров просмотра
        </a>
        <div className="flex gap-2">
          <DialogButton className="w-[88px]" primary>OK</DialogButton>
          <DialogButton className="w-[88px]">Отмена</DialogButton>
          <DialogButton className="w-[88px]" disabled>Применить</DialogButton>
        </div>
      </div>
      <span className="absolute right-0.5 bottom-0.5">
        <Grip />
      </span>
      <Annotations />
    </section>
  );
}

export default function App() {
  return (
    <div className={`relative flex h-screen flex-col overflow-hidden bg-[#cbcbcb] ${FONT}`}>
      <TitleBar />
      <RibbonTabs />
      <Ribbon />
      <div className="mx-1 h-[27px] shrink-0 border-b border-[#d0d0d0] bg-[#efefef]" />
      <div className="flex min-h-0 flex-1">
        <Palettes />
        <DrawingArea />
      </div>
      <StatusBar />
      <VisibilityDialog />
      <FiltersDialog />
    </div>
  );
}
